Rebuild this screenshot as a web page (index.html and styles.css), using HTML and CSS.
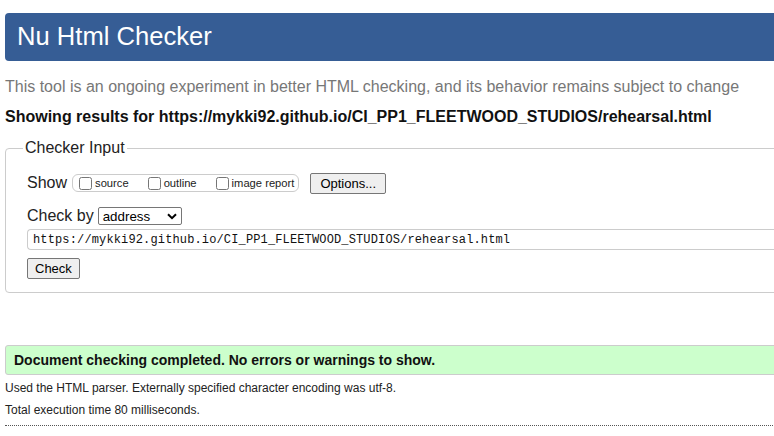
FILE: index.html
```html
<!DOCTYPE html>
<html>
<head>
<meta charset="utf-8">
<link rel="stylesheet" href="styles.css">
<title>Nu Html Checker</title>
</head>
<body>
<div class="page">
  <h1 class="banner">Nu Html Checker</h1>
  <p class="subtitle">This tool is an ongoing experiment in better HTML checking, and its behavior remains subject to change</p>
  <p class="showing">Showing results for https://mykki92.github.io/CI_PP1_FLEETWOOD_STUDIOS/rehearsal.html</p>
  <fieldset class="input-box">
    <legend class="legend">Checker Input</legend>
    <div class="row show-row">
      <span class="row-label">Show</span>
      <span class="pill">
        <label class="opt"><input type="checkbox" class="cb">source</label>
        <label class="opt"><input type="checkbox" class="cb">outline</label>
        <label class="opt last"><input type="checkbox" class="cb">image report</label>
      </span>
      <button class="btn options">Options...</button>
    </div>
    <div class="row by-row">
      <span class="row-label">Check by</span>
      <span class="select"><span class="select-text">address</span><svg class="chev" width="10" height="7" viewBox="0 0 10 7"><path d="M1 1.2 L5 5.2 L9 1.2" fill="none" stroke="#000" stroke-width="2"/></svg></span>
    </div>
    <div class="url">https://mykki92.github.io/CI_PP1_FLEETWOOD_STUDIOS/rehearsal.html</div>
    <div class="row">
      <button class="btn check">Check</button>
    </div>
  </fieldset>
  <div class="success">Document checking completed. No errors or warnings to show.</div>
  <p class="info">Used the HTML parser. Externally specified character encoding was utf-8.</p>
  <p class="info">Total execution time 80 milliseconds.</p>
  <div class="rule"></div>
</div>
</body>
</html>
```
FILE: styles.css
```css
html, body {
  margin: 0;
  padding: 0;
  overflow: hidden;
  background: #fff;
}
body {
  font-family: "Liberation Sans", Arial, sans-serif;
  color: #000;
}
.page {
  width: 820px;
  margin-left: 5px;
  padding-top: 13px;
}
.banner {
  margin: 0;
  height: 48px;
  box-sizing: border-box;
  display: flex;
  align-items: center;
  padding-left: 12px;
  padding-bottom: 2px;
  background: #365d95;
  color: #fff;
  font-weight: normal;
  font-size: 25.6px;
  border-radius: 4px;
}
.subtitle {
  margin: 17px 0 0 0;
  font-size: 16px;
  line-height: 18px;
  color: #777;
}
.showing {
  margin: 12px 0 0 0;
  font-size: 16px;
  line-height: 18px;
  font-weight: bold;
  color: #111;
}
.input-box {
  margin: 13px 0 0 0;
  padding: 0 0 13px 21px;
  border: 1px solid #ccc;
  border-radius: 4px;
  min-width: 0;
}
.legend {
  margin-left: -4px;
  padding: 0 2px;
  font-size: 16px;
  line-height: 18px;
  color: #222;
}
.row {
  display: flex;
  align-items: center;
}
.row-label {
  font-size: 16px;
  color: #222;
  margin-right: 4px;
}
.show-row {
  margin-top: 15px;
  height: 22px;
}
.pill {
  display: inline-flex;
  align-items: center;
  height: 18px;
  box-sizing: border-box;
  border: 1px solid #ccc;
  border-radius: 6px;
  padding: 0 4px 0 2px;
  margin-left: 1px;
}
.opt {
  display: inline-flex;
  align-items: center;
  font-size: 11.2px;
  color: #222;
  margin-right: 15px;
}
.opt.last {
  margin-right: 0;
}
.cb {
  width: 13px;
  height: 13px;
  margin: 0 3px 0 4px;
}
.btn {
  font-family: "Liberation Sans", Arial, sans-serif;
  font-size: 13px;
  color: #000;
  background: #efefef;
  border: 1px solid #767676;
  border-radius: 2px;
  box-sizing: border-box;
  padding: 0 8px;
}
.options {
  margin-left: 11px;
  height: 21px;
  padding: 0 9px;
}
.by-row {
  margin-top: 11px;
  height: 22px;
}
.select {
  display: inline-flex;
  align-items: center;
  justify-content: space-between;
  width: 84px;
  height: 18px;
  box-sizing: border-box;
  border: 1px solid #767676;
  border-radius: 2px;
  padding: 0 4px 0 4px;
  font-size: 13.33px;
  color: #000;
}
.chev {
  display: block;
}
.url {
  margin-top: 2px;
  height: 21px;
  box-sizing: border-box;
  border: 1px solid #ccc;
  border-right: none;
  border-radius: 4px 0 0 4px;
  padding-left: 5px;
  display: flex;
  align-items: center;
  font-family: "Liberation Mono", "DejaVu Sans Mono", monospace;
  font-size: 12px;
  letter-spacing: 0.14px;
  color: #111;
}
.url + .row {
  margin-top: 8px;
}
.check {
  height: 21px;
  padding: 0 7px;
}
.success {
  margin-top: 52px;
  height: 30px;
  box-sizing: border-box;
  display: flex;
  align-items: center;
  padding-left: 8px;
  background: #ccffcc;
  border: 1px solid #ccc;
  border-radius: 3px 0 0 3px;
  font-weight: bold;
  font-size: 14px;
  color: #111;
}
.info {
  margin: 6px 0 0 0;
  font-size: 12px;
  line-height: 15px;
  color: #222;
}
.info + .info {
  margin-top: 7px;
}
.rule {
  margin-top: 7px;
  border-top: 1px dotted #555;
}
```
